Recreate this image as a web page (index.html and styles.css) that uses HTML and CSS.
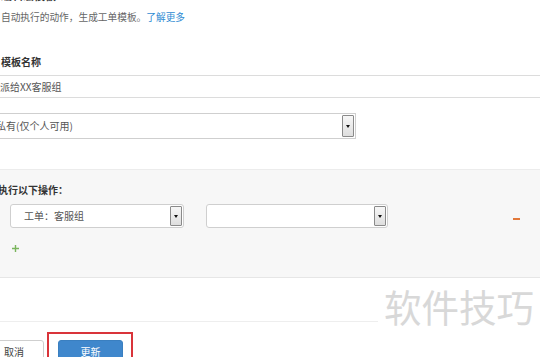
FILE: index.html
```html
<!DOCTYPE html>
<html lang="zh">
<head>
<meta charset="utf-8">
<link rel="stylesheet" href="styles.css">
</head>
<body>
<div class="page">
  <header class="intro">
    <h1 class="title">编辑宏模板</h1>
    <p class="desc">自动执行的动作，生成工单模板。<a class="link" href="#">了解更多</a></p>
  </header>

  <section class="field">
    <label class="label">模板名称</label>
    <div class="input">派给XX客服组</div>
  </section>

  <div class="select select-wide">
    <span class="select-value">私有(仅个人可用)</span>
    <span class="select-btn"><i class="tri"></i></span>
  </div>

  <section class="actions">
    <h3 class="label label-cut">执行以下操作：</h3>
    <div class="action-row">
      <div class="select select-a">
        <span class="select-value">工单：客服组</span>
        <span class="select-btn"><i class="tri"></i></span>
      </div>
      <div class="select select-b">
        <span class="select-value"></span>
        <span class="select-btn"><i class="tri"></i></span>
      </div>
      <span class="minus"></span>
    </div>
    <div class="add">
      <svg width="7" height="7" viewBox="0 0 7 7"><path d="M3.5 0V7M0 3.5H7" stroke="#7ab55c" stroke-width="1.4"/></svg>
    </div>
  </section>

  <div class="spacer"></div>

  <footer class="footer">
    <button class="btn btn-cancel">取消</button>
    <span class="highlight"><button class="btn btn-primary">更新</button></span>
  </footer>

  <div class="watermark">软件技巧</div>
</div>
</body>
</html>
```

FILE: styles.css
```css
html, body {
  margin: 0;
  padding: 0;
  background: #fff;
}
body {
  width: 540px;
  height: 357px;
  overflow: hidden;
  font-family: "Noto Sans CJK SC", "Noto Sans", sans-serif;
  font-size: 10px;
  color: #555;
}
.page {
  position: relative;
  width: 540px;
  height: 357px;
  overflow: hidden;
}
.intro {
  padding-left: 1px;
}
.title {
  margin: -11px 0 0;
  font-size: 11px;
  line-height: 12px;
  height: 12px;
  font-weight: bold;
  color: #333;
}
.desc {
  margin: 10px 0 0;
  font-size: 9.7px;
  line-height: 12px;
  color: #666;
}
.link {
  color: #2e8bd3;
  text-decoration: none;
}
.field {
  margin-top: 33px;
}
.label {
  display: block;
  margin: 0;
  padding-left: 1px;
  font-size: 10px;
  line-height: 12px;
  font-weight: bold;
  color: #333;
}
.label-cut {
  padding-left: 0;
  text-indent: -2px;
}
.input {
  margin: 7px -10px 0;
  height: 21px;
  line-height: 21px;
  padding-left: 9px;
  border-top: 1px solid #dcdcdc;
  border-bottom: 1px solid #dcdcdc;
  border-left: 1px solid #dcdcdc;
  color: #555;
}
.select {
  display: flex;
  align-items: center;
  justify-content: space-between;
  box-sizing: border-box;
  background: #fff;
  border: 1px solid #cfcfcf;
  padding-right: 1px;
}
.select-wide {
  margin: 15px 0 0 -10px;
  width: 366px;
  height: 26px;
  padding-left: 5px;
}
.select-value {
  line-height: 12px;
  color: #555;
  white-space: nowrap;
}
.select-btn {
  box-sizing: border-box;
  width: 12px;
  height: calc(100% - 2px);
  border: 1px solid #8a8a8a;
  border-radius: 1px;
  background: linear-gradient(#f7f7f7, #dedede);
  display: flex;
  align-items: center;
  justify-content: center;
}
.tri {
  display: block;
  width: 0;
  height: 0;
  border-left: 2.5px solid transparent;
  border-right: 2.5px solid transparent;
  border-top: 3px solid #111;
}
.actions {
  margin-top: 30px;
  background: #f7f7f7;
  border-top: 1px solid #ececec;
  border-bottom: 1px solid #e6e6e6;
  padding: 14px 0 23px;
}
.action-row {
  display: flex;
  align-items: center;
  margin-top: 8px;
  padding-left: 10px;
  padding-right: 20px;
}
.select-a {
  width: 174px;
  height: 24px;
  border-radius: 3px;
  padding-left: 13px;
}
.select-b {
  width: 182px;
  height: 24px;
  border-radius: 3px;
  margin-left: 22px;
}
.minus {
  margin-left: auto;
  margin-top: 6px;
  width: 7px;
  height: 2px;
  background: #e2783a;
}
.add {
  margin-top: 14px;
  padding-left: 12px;
  height: 12px;
  display: flex;
  align-items: center;
}
.add svg {
  display: block;
}
.spacer {
  height: 43px;
  border-bottom: 1px solid #eeeeee;
}
.footer {
  display: flex;
  align-items: flex-start;
  padding-top: 10px;
}
.btn {
  font-family: "Noto Sans CJK SC", "Noto Sans", sans-serif;
  font-size: 10px;
  line-height: 12px;
  box-sizing: border-box;
  height: 24px;
  border-radius: 3px;
  cursor: pointer;
}
.btn-cancel {
  margin: 8px 0 0 -7px;
  width: 51px;
  padding: 0 0 0 10px;
  text-align: left;
  background: #fff;
  border: 1px solid #cfcfcf;
  color: #444;
}
.highlight {
  display: block;
  margin-left: 3px;
  border: 2px solid #d9343a;
  padding: 6px 8px 8px 9px;
}
.btn-primary {
  display: block;
  width: 65px;
  border: 1px solid #3a7fc0;
  background: #3f87cc;
  color: #fff;
  text-align: center;
  padding: 0;
}
.watermark {
  position: absolute;
  left: 378px;
  top: 278px;
  width: 162px;
  height: 62px;
  background: #fff;
  padding-left: 6px;
  box-sizing: border-box;
  font-size: 37.5px;
  line-height: 56px;
  color: #d8d8d8;
  white-space: nowrap;
}
```
